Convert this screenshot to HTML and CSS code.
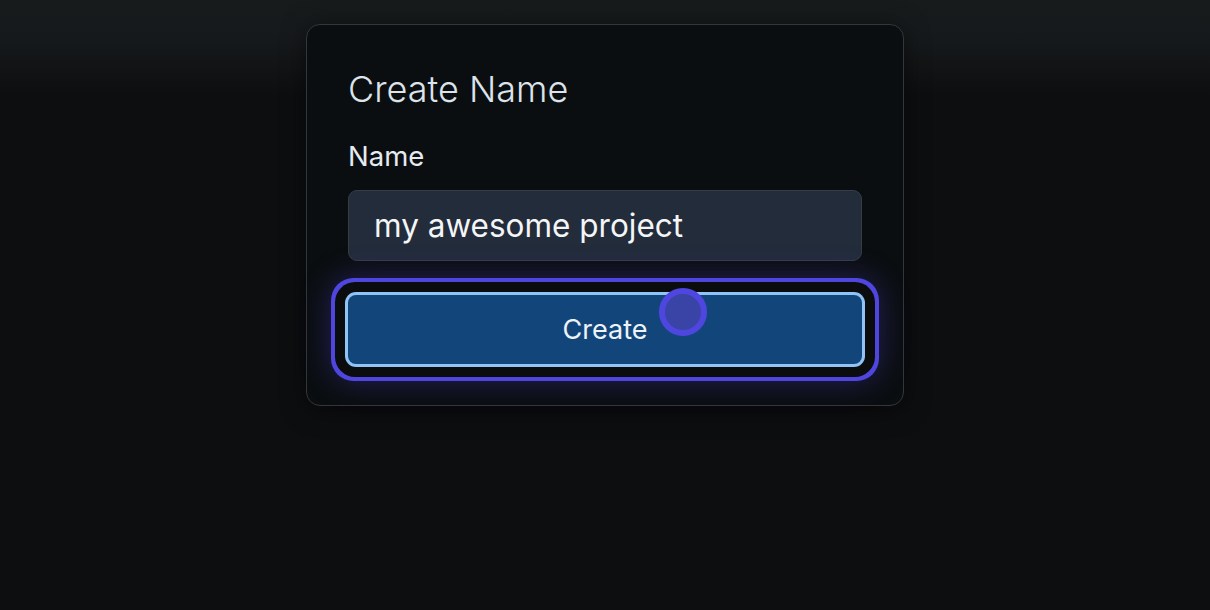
FILE: index.html
```html
<!DOCTYPE html>
<html>
<head>
<meta charset="utf-8">
<link rel="stylesheet" href="styles.css">
</head>
<body>
<div class="page">
  <div class="card">
    <h1 class="title">Create Name</h1>
    <label class="label" for="name">Name</label>
    <input class="input" id="name" type="text" value="my awesome project">
    <div class="btn-wrap">
      <button class="btn">Create</button>
      <span class="cursor"></span>
    </div>
  </div>
</div>
</body>
</html>
```
FILE: styles.css
```css
* { box-sizing: border-box; }
html, body { margin: 0; padding: 0; }
body {
  width: 1210px;
  height: 610px;
  overflow: hidden;
  background: linear-gradient(to bottom, #181b1c 0px, #16191b 40px, #0d0e10 95px, #0d0e10 100%);
  font-family: Inter, "Noto Sans", sans-serif;
}
.page {
  display: flex;
  justify-content: center;
  padding-top: 24px;
}
.card {
  width: 598px;
  background: #0b0e10;
  border: 1px solid #33373b;
  border-radius: 14px;
  padding: 44px 41px 41px;
  display: flex;
  flex-direction: column;
  box-shadow: 0 4px 24px rgba(0,0,0,0.5);
}
.title {
  margin: 0;
  font-size: 36px;
  font-weight: 300;
  line-height: 40px;
  color: #dce3ea;
}
.label {
  margin-top: 31px;
  font-size: 27.5px;
  line-height: 32px;
  color: #e6ebf0;
}
.input {
  margin-top: 18px;
  height: 71px;
  width: 100%;
  background: #232c3a;
  border: 1px solid #363d47;
  border-radius: 9px;
  padding: 0 25px;
  font-family: Inter, "Noto Sans", sans-serif;
  font-size: 31.5px;
  color: #f3f5f7;
  outline: none;
}
.btn-wrap {
  position: relative;
  margin-top: 34px;
}
.btn {
  display: block;
  width: 100%;
  height: 69px;
  background: #12467a;
  border: none;
  border-radius: 8px;
  color: #eef3f8;
  font-family: Inter, "Noto Sans", sans-serif;
  font-size: 27px;
  box-shadow:
    0 0 0 3px #90c4f7,
    0 0 0 13px #0a0c0e,
    0 0 0 17px #4f46e0,
    0 0 30px 17px rgba(79, 70, 229, 0.35);
}
.cursor {
  position: absolute;
  left: 311px;
  top: -7px;
  width: 48px;
  height: 48px;
  border-radius: 50%;
  border: 6px solid #4f46e0;
  background: #3a43a6;
}
```
